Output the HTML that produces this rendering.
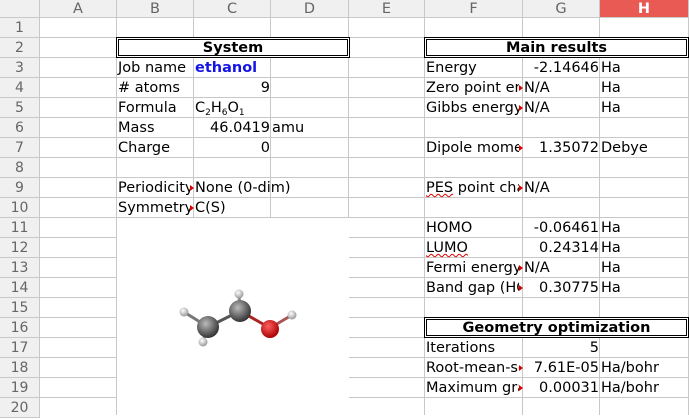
<!DOCTYPE html>
<html><head><meta charset="utf-8"><style>
*{margin:0;padding:0;box-sizing:border-box}
body{width:689px;height:415px;overflow:hidden;background:#fff;position:relative;font-family:"DejaVu Sans","Liberation Sans",sans-serif;font-size:14.5px;color:#000}
.hd{position:absolute;top:0;height:18px;background:#f0f0f0;border-right:1px solid #c8c8c8;border-bottom:1px solid #c8c8c8;color:#666;text-align:center;line-height:19px;font-size:14.5px}
.rn{position:absolute;left:0;width:40px;height:20px;background:#f0f0f0;border-right:1px solid #c8c8c8;border-bottom:1px solid #c8c8c8;color:#666;text-align:center;line-height:21px;font-size:14px}
.v{position:absolute;top:18px;bottom:0;width:1px;background:#c8c8c8}
.h{position:absolute;left:40px;right:0;height:1px;background:#c8c8c8}
.c{position:absolute;height:20px;line-height:21px;padding-left:1px;white-space:nowrap;overflow:hidden}
.r{text-align:right;padding-right:1px}
.box{position:absolute;height:21px;border:3px double #000;background:#fff;text-align:center;font-weight:bold;line-height:16px}
.tri{position:absolute;width:0;height:0;border-left:4px solid #d00;border-top:3px solid transparent;border-bottom:3px solid transparent}
sub{font-size:9px;vertical-align:-3px}
.sq{text-decoration:underline wavy #d00;text-decoration-thickness:1px}
</style></head><body>
<div class="hd" style="left:0;width:40px"></div>
<div class="hd" style="left:40px;width:77px">A</div>
<div class="hd" style="left:117px;width:77px">B</div>
<div class="hd" style="left:194px;width:77px">C</div>
<div class="hd" style="left:271px;width:78px">D</div>
<div class="hd" style="left:349px;width:76px">E</div>
<div class="hd" style="left:425px;width:98px">F</div>
<div class="hd" style="left:523px;width:77px">G</div>
<div class="hd" style="left:600px;width:89px;background:#ea5a55;color:#fff;font-weight:bold">H</div>

<div class="rn" style="top:18px">1</div><div class="rn" style="top:38px">2</div><div class="rn" style="top:58px">3</div><div class="rn" style="top:78px">4</div><div class="rn" style="top:98px">5</div><div class="rn" style="top:118px">6</div><div class="rn" style="top:138px">7</div><div class="rn" style="top:158px">8</div><div class="rn" style="top:178px">9</div><div class="rn" style="top:198px">10</div><div class="rn" style="top:218px">11</div><div class="rn" style="top:238px">12</div><div class="rn" style="top:258px">13</div><div class="rn" style="top:278px">14</div><div class="rn" style="top:298px">15</div><div class="rn" style="top:318px">16</div><div class="rn" style="top:338px">17</div><div class="rn" style="top:358px">18</div><div class="rn" style="top:378px">19</div><div class="rn" style="top:398px">20</div>

<div class="v" style="left:116px"></div><div class="v" style="left:193px"></div><div class="v" style="left:270px"></div><div class="v" style="left:348px"></div><div class="v" style="left:424px"></div><div class="v" style="left:522px"></div><div class="v" style="left:599px"></div><div class="v" style="left:688px"></div>
<div class="h" style="top:37px"></div><div class="h" style="top:57px"></div><div class="h" style="top:77px"></div><div class="h" style="top:97px"></div><div class="h" style="top:117px"></div><div class="h" style="top:137px"></div><div class="h" style="top:157px"></div><div class="h" style="top:177px"></div><div class="h" style="top:197px"></div><div class="h" style="top:217px"></div><div class="h" style="top:237px"></div><div class="h" style="top:257px"></div><div class="h" style="top:277px"></div><div class="h" style="top:297px"></div><div class="h" style="top:317px"></div><div class="h" style="top:337px"></div><div class="h" style="top:357px"></div><div class="h" style="top:377px"></div><div class="h" style="top:397px"></div>

<div style="position:absolute;left:117px;top:218px;width:232px;height:197px;background:#fff"></div>
<svg style="position:absolute;left:150px;top:270px" width="170" height="90" viewBox="0 0 170 90">
<defs>
<radialGradient id="g" cx="40%" cy="35%" r="65%"><stop offset="0" stop-color="#bbb"/><stop offset="1" stop-color="#333"/></radialGradient>
<radialGradient id="rd" cx="40%" cy="35%" r="65%"><stop offset="0" stop-color="#ff6060"/><stop offset="1" stop-color="#a00"/></radialGradient>
<radialGradient id="w" cx="40%" cy="35%" r="65%"><stop offset="0" stop-color="#fff"/><stop offset="1" stop-color="#999"/></radialGradient>
</defs>
<g stroke-width="3">
<line x1="34" y1="42" x2="58" y2="57" stroke="#777"/>
<line x1="58" y1="57" x2="90" y2="41" stroke="#555"/>
<line x1="90" y1="41" x2="89" y2="24" stroke="#888"/>
<line x1="58" y1="57" x2="53" y2="71" stroke="#888"/>
<line x1="90" y1="41" x2="120" y2="58" stroke="#a22"/>
<line x1="120" y1="58" x2="142" y2="45" stroke="#a55"/>
</g>
<circle cx="34" cy="42" r="4.5" fill="url(#w)"/>
<circle cx="89" cy="24" r="4.5" fill="url(#w)"/>
<circle cx="58" cy="57" r="11" fill="url(#g)"/>
<circle cx="53" cy="72" r="4.5" fill="url(#w)"/>
<circle cx="90" cy="41" r="11" fill="url(#g)"/>
<circle cx="120" cy="59" r="9" fill="url(#rd)"/>
<circle cx="142" cy="45" r="4.5" fill="url(#w)"/>
</svg>

<div class="box" style="left:116px;top:37px;width:234px">System</div>
<div class="box" style="left:424px;top:37px;width:265px">Main results</div>
<div class="box" style="left:424px;top:317px;width:265px">Geometry optimization</div>

<div class="c" style="left:117px;top:58px">Job name</div>
<div class="c" style="left:194px;top:58px;color:#1414e6;font-weight:bold">ethanol</div>
<div class="c" style="left:117px;top:78px"># atoms</div>
<div class="c r" style="left:194px;top:78px;width:77px">9</div>
<div class="c" style="left:117px;top:98px">Formula</div>
<div class="c" style="left:194px;top:98px">C<sub>2</sub>H<sub>6</sub>O<sub>1</sub></div>
<div class="c" style="left:117px;top:118px">Mass</div>
<div class="c r" style="left:194px;top:118px;width:77px">46.0419</div>
<div class="c" style="left:271px;top:118px">amu</div>
<div class="c" style="left:117px;top:138px">Charge</div>
<div class="c r" style="left:194px;top:138px;width:77px">0</div>
<div class="c" style="left:117px;top:178px;width:73px">Periodicity</div><div class="tri" style="left:190px;top:185px"></div>
<div class="c" style="left:194px;top:178px">None (0-dim)</div>
<div class="c" style="left:117px;top:198px;width:73px">Symmetry</div><div class="tri" style="left:190px;top:205px"></div>
<div class="c" style="left:194px;top:198px">C(S)</div>

<div class="c" style="left:425px;top:58px">Energy</div>
<div class="c r" style="left:523px;top:58px;width:77px">-2.14646</div>
<div class="c" style="left:600px;top:58px">Ha</div>
<div class="c" style="left:425px;top:78px;width:94px">Zero point energy</div><div class="tri" style="left:519px;top:85px"></div>
<div class="c" style="left:523px;top:78px">N/A</div><div class="c" style="left:600px;top:78px">Ha</div>
<div class="c" style="left:425px;top:98px;width:94px">Gibbs energy</div><div class="tri" style="left:519px;top:105px"></div>
<div class="c" style="left:523px;top:98px">N/A</div><div class="c" style="left:600px;top:98px">Ha</div>
<div class="c" style="left:425px;top:138px;width:94px">Dipole moment</div><div class="tri" style="left:519px;top:145px"></div>
<div class="c r" style="left:523px;top:138px;width:77px">1.35072</div><div class="c" style="left:600px;top:138px">Debye</div>
<div class="c" style="left:425px;top:178px;width:94px"><span class="sq">PES</span> point charge</div><div class="tri" style="left:519px;top:185px"></div>
<div class="c" style="left:523px;top:178px">N/A</div>
<div class="c" style="left:425px;top:218px">HOMO</div>
<div class="c r" style="left:523px;top:218px;width:77px">-0.06461</div><div class="c" style="left:600px;top:218px">Ha</div>
<div class="c" style="left:425px;top:238px"><span class="sq">LUMO</span></div>
<div class="c r" style="left:523px;top:238px;width:77px">0.24314</div><div class="c" style="left:600px;top:238px">Ha</div>
<div class="c" style="left:425px;top:258px;width:94px">Fermi energy</div><div class="tri" style="left:519px;top:265px"></div>
<div class="c" style="left:523px;top:258px">N/A</div><div class="c" style="left:600px;top:258px">Ha</div>
<div class="c" style="left:425px;top:278px;width:94px">Band gap (HOMO</div><div class="tri" style="left:519px;top:285px"></div>
<div class="c r" style="left:523px;top:278px;width:77px">0.30775</div><div class="c" style="left:600px;top:278px">Ha</div>
<div class="c" style="left:425px;top:338px">Iterations</div>
<div class="c r" style="left:523px;top:338px;width:77px">5</div>
<div class="c" style="left:425px;top:358px;width:94px">Root-mean-square</div><div class="tri" style="left:519px;top:365px"></div>
<div class="c r" style="left:523px;top:358px;width:77px">7.61E-05</div><div class="c" style="left:600px;top:358px">Ha/bohr</div>
<div class="c" style="left:425px;top:378px;width:94px">Maximum gradient</div><div class="tri" style="left:519px;top:385px"></div>
<div class="c r" style="left:523px;top:378px;width:77px">0.00031</div><div class="c" style="left:600px;top:378px">Ha/bohr</div>
</body></html>
